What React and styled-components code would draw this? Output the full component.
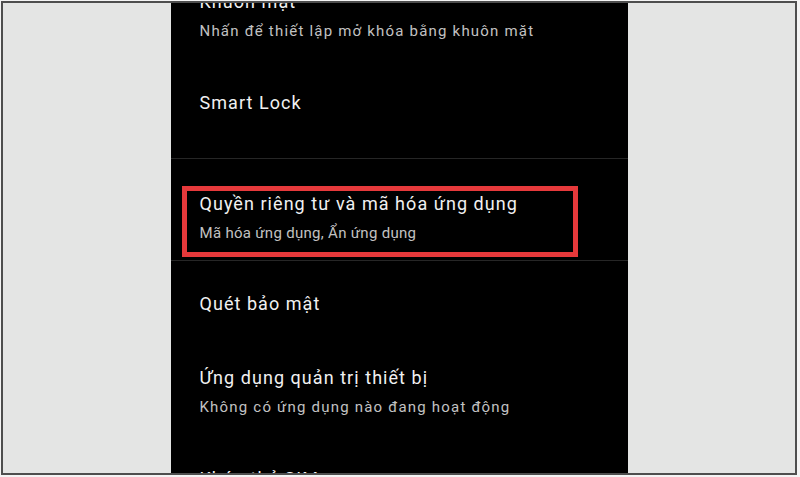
import React from "react";
import styled, { createGlobalStyle } from "styled-components";

const Global = createGlobalStyle`
  html, body { margin: 0; padding: 0; background: #f4f4f4; }
  body { font-family: Roboto, "Noto Sans", sans-serif; }
`;

const Page = styled.div`
  width: 800px;
  height: 477px;
  padding: 1px 3px 2px 1px;
  box-sizing: border-box;
`;

const Frame = styled.div`
  height: 100%;
  box-sizing: border-box;
  border: 2px solid #4e4e4e;
  background: #e4e5e4;
  display: flex;
  justify-content: center;
`;

const Screen = styled.div`
  width: 457px;
  background: #000;
  overflow: hidden;
`;

const List = styled.div`
  margin-top: -39px;
  display: flex;
  flex-direction: column;
`;

const Item = styled.div`
  position: relative;
  padding: ${(p) => p.$top ?? 26}px 20px ${(p) => p.$bottom ?? 23}px 29px;
  display: flex;
  flex-direction: column;
  gap: 6px;
`;

const Title = styled.div`
  font-size: 18px;
  line-height: 24px;
  letter-spacing: 1.05px;
  color: #f1f1f1;
  white-space: nowrap;
`;

const Sub = styled.div`
  font-size: 15px;
  line-height: 22px;
  letter-spacing: ${(p) => p.$spacing ?? 1.2}px;
  color: #c2c2c2;
  white-space: nowrap;
`;

const Divider = styled.div`
  height: 1px;
  background: #262626;
`;

const Highlight = styled.div`
  position: absolute;
  left: 11px;
  top: 27px;
  width: 396px;
  height: 71px;
  box-sizing: border-box;
  border: 5px solid #e6393b;
  pointer-events: none;
`;

export default function App() {
  return (
    <>
      <Global />
      <Page>
        <Frame>
          <Screen>
            <List>
              <Item>
                <Title>Khuôn mặt</Title>
                <Sub>Nhấn để thiết lập mở khóa bằng khuôn mặt</Sub>
              </Item>
              <Item $bottom={43}>
                <Title>Smart Lock</Title>
              </Item>
              <Divider />
              <Item $top={33} $bottom={16}>
                <Title>Quyền riêng tư và mã hóa ứng dụng</Title>
                <Sub $spacing={0.3}>Mã hóa ứng dụng, Ẩn ứng dụng</Sub>
                <Highlight />
              </Item>
              <Divider />
              <Item $top={31} $bottom={24}>
                <Title>Quét bảo mật</Title>
              </Item>
              <Item>
                <Title>Ứng dụng quản trị thiết bị</Title>
                <Sub>Không có ứng dụng nào đang hoạt động</Sub>
              </Item>
              <Item>
                <Title>Khóa thẻ SIM</Title>
              </Item>
            </List>
          </Screen>
        </Frame>
      </Page>
    </>
  );
}
